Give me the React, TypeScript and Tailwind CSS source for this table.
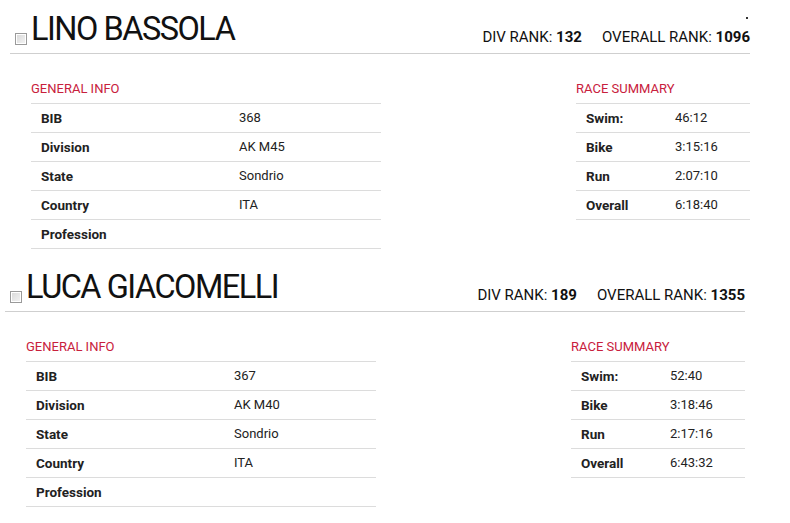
import React from "react";

type Athlete = {
  name: string;
  divRank: number;
  overallRank: number;
  info: [string, string][];
  summary: [string, string][];
};

const athletes: Athlete[] = [
  {
    name: "LINO BASSOLA",
    divRank: 132,
    overallRank: 1096,
    info: [
      ["BIB", "368"],
      ["Division", "AK M45"],
      ["State", "Sondrio"],
      ["Country", "ITA"],
      ["Profession", ""],
    ],
    summary: [
      ["Swim:", "46:12"],
      ["Bike", "3:15:16"],
      ["Run", "2:07:10"],
      ["Overall", "6:18:40"],
    ],
  },
  {
    name: "LUCA GIACOMELLI",
    divRank: 189,
    overallRank: 1355,
    info: [
      ["BIB", "367"],
      ["Division", "AK M40"],
      ["State", "Sondrio"],
      ["Country", "ITA"],
      ["Profession", ""],
    ],
    summary: [
      ["Swim:", "52:40"],
      ["Bike", "3:18:46"],
      ["Run", "2:17:16"],
      ["Overall", "6:43:32"],
    ],
  },
];

function Checkbox() {
  return (
    <span className="inline-block w-[12px] h-[12px] border border-[#9a9a9a] bg-gradient-to-br from-[#d8d8d8] to-[#f4f4f4] shadow-[inset_0_0_0_1px_#fff] mr-[4px] mb-[1px]" />
  );
}

function AthleteBlock({ a, offset }: { a: Athlete; offset: string }) {
  return (
    <div className={`${offset} w-[740px] h-[258px]`}>
      {/* header */}
      <div className="h-[54px] border-b border-[#cfcfcf] flex items-end justify-between pb-[7px]">
        <div className="flex items-end pl-[5px]">
          <Checkbox />
          <span className="text-[32.5px] leading-[33px] text-[#111] tracking-[-1.5px]">{a.name}</span>
        </div>
        <div className="text-[15px] leading-[16px] text-[#111] flex gap-[20px] mb-[1px]">
          <span>
            DIV RANK: <b className="font-bold">{a.divRank}</b>
          </span>
          <span>
            OVERALL RANK: <b className="font-bold">{a.overallRank}</b>
          </span>
        </div>
      </div>

      {/* details */}
      <div className="flex justify-between pl-[21px]">
        <div className="w-[350px]">
          <div className="pt-[27px] pb-[6px] leading-[16px] text-[13px] text-[#c8203c]">GENERAL INFO</div>
          <div className="border-t border-[#dcdcdc]">
            {a.info.map(([k, v]) => (
              <div key={k} className="h-[29px] border-b border-[#dcdcdc] flex items-center text-[13px] text-[#222]">
                <span className="w-[208px] pl-[10px] font-bold text-[13.5px]">{k}</span>
                <span>{v}</span>
              </div>
            ))}
          </div>
        </div>
        <div className="w-[174px]">
          <div className="pt-[27px] pb-[6px] leading-[16px] text-[13px] text-[#c8203c]">RACE SUMMARY</div>
          <div className="border-t border-[#dcdcdc]">
            {a.summary.map(([k, v]) => (
              <div key={k} className="h-[29px] border-b border-[#dcdcdc] flex items-center text-[13px] text-[#222]">
                <span className="w-[99px] pl-[10px] font-bold text-[13.5px]">{k}</span>
                <span>{v}</span>
              </div>
            ))}
          </div>
        </div>
      </div>
    </div>
  );
}

export default function App() {
  return (
    <div className="w-[790px] h-[523px] bg-white overflow-hidden relative font-['Roboto','Liberation_Sans',sans-serif]">
      <span className="absolute left-[746px] top-[17px] w-[2px] h-[2px] bg-[#333]" />
      <AthleteBlock a={athletes[0]} offset="ml-[10px]" />
      <AthleteBlock a={athletes[1]} offset="ml-[5px]" />
    </div>
  );
}
